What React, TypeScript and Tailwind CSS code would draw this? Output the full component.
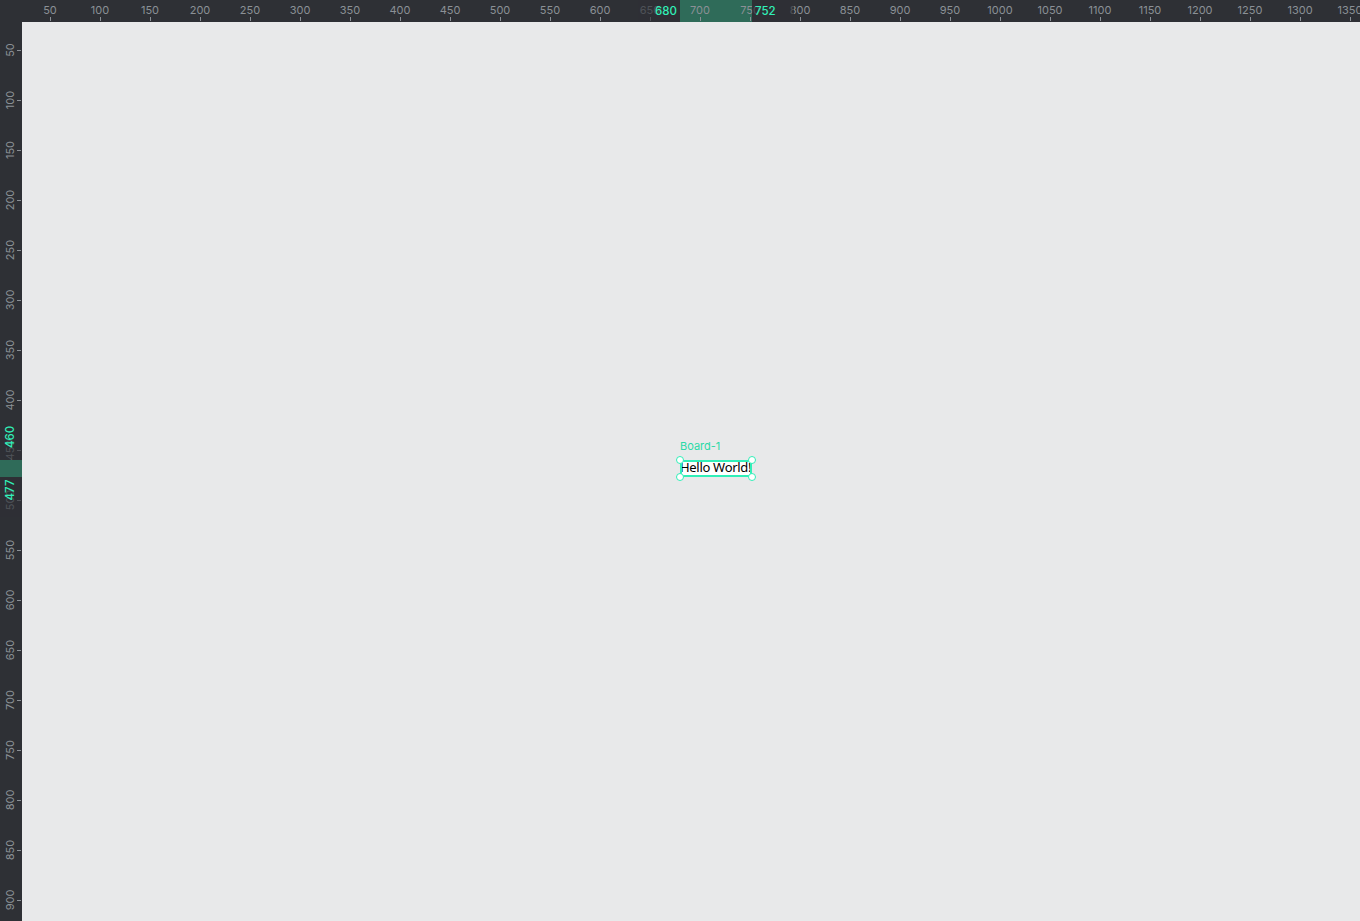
import React from 'react';

const RULER_BG = '#2e3035';
const LABEL = '#8b9096';
const GREEN = '#31efb8';

const topTicks = Array.from({ length: 27 }, (_, i) => (i + 1) * 50);
const leftTicks = Array.from({ length: 18 }, (_, i) => (i + 1) * 50);

const TopRuler = () => (
  <svg width="1360" height="22" className="block" style={{ fontFamily: 'Inter, "Noto Sans", sans-serif' }}>
    <rect x="0" y="0" width="1360" height="22" fill={RULER_BG} />
    <rect x="680" y="0" width="72" height="22" fill="#2f6b59" />
    {topTicks.map(v => (
      <g key={v}>
        <text x={v} y="14" textAnchor="middle" fontSize="11" fill={LABEL}>{v}</text>
        <rect x={v} y="17" width="1" height="4" fill={LABEL} />
      </g>
    ))}
    {/* selection markers */}
    <rect x="638" y="0" width="42" height="21" fill={RULER_BG} opacity="0.65" />
    <text x="677" y="15" textAnchor="end" fontSize="11.5" fontWeight="500" fill={GREEN}>680</text>
    <rect x="752" y="0" width="42" height="21" fill={RULER_BG} opacity="0.65" />
    <text x="755" y="15" fontSize="11.5" fontWeight="500" fill={GREEN}>752</text>
  </svg>
);

const LeftRuler = () => (
  <svg width="22" height="899" className="block shrink-0" style={{ fontFamily: 'Inter, "Noto Sans", sans-serif' }}>
    <rect x="0" y="0" width="22" height="899" fill={RULER_BG} />
    <g transform="translate(0,-22)">
      <rect x="0" y="460" width="22" height="17" fill="#2f6b59" />
      {leftTicks.map(v => (
        <g key={v}>
          <text
            x="0"
            y="0"
            transform={`translate(14,${v}) rotate(-90)`}
            textAnchor="middle"
            fontSize="11"
            fill={LABEL}
          >
            {v}
          </text>
          <rect x="17" y={v} width="4" height="1" fill={LABEL} />
        </g>
      ))}
      <rect x="0" y="420" width="21" height="39" fill={RULER_BG} opacity="0.65" />
      <text x="0" y="0" transform="translate(14,437) rotate(-90)" textAnchor="middle" fontSize="11.5" fontWeight="500" fill={GREEN}>460</text>
      <rect x="0" y="478" width="21" height="39" fill={RULER_BG} opacity="0.65" />
      <text x="0" y="0" transform="translate(14,490) rotate(-90)" textAnchor="middle" fontSize="11.5" fontWeight="500" fill={GREEN}>477</text>
    </g>
  </svg>
);

const Handle = ({ className }: { className: string }) => (
  <div className={`absolute w-[8px] h-[8px] rounded-full bg-white border border-[#31efb8] ${className}`} />
);

export default function App() {
  return (
    <div className="w-[1360px] h-[921px] flex flex-col overflow-hidden bg-[#e8e9ea]">
      <TopRuler />
      <div className="flex flex-1 min-h-0">
        <LeftRuler />
        {/* canvas */}
        <div className="relative flex-1 bg-[#e8e9ea]">
          <div className="absolute left-[658px] top-[417px] text-[11px] leading-[14px] text-[#2bd9a6]" style={{ fontFamily: 'Inter, "Noto Sans", sans-serif' }}>
            Board-1
          </div>
          <div className="absolute left-[658px] top-[438px] w-[72px] h-[17px] bg-white">
            <div
              className="h-full flex items-center pb-[2px] whitespace-nowrap text-[13px] leading-none text-black"
              style={{ fontFamily: '"Noto Sans", sans-serif', letterSpacing: '-0.3px' }}
            >
              Hello World!
            </div>
            <div className="absolute inset-0 border-2 border-[#31efb8]" />
            <Handle className="-left-[4px] -top-[4px]" />
            <Handle className="-right-[4px] -top-[4px]" />
            <Handle className="-left-[4px] -bottom-[4px]" />
            <Handle className="-right-[4px] -bottom-[4px]" />
          </div>
        </div>
      </div>
    </div>
  );
}
